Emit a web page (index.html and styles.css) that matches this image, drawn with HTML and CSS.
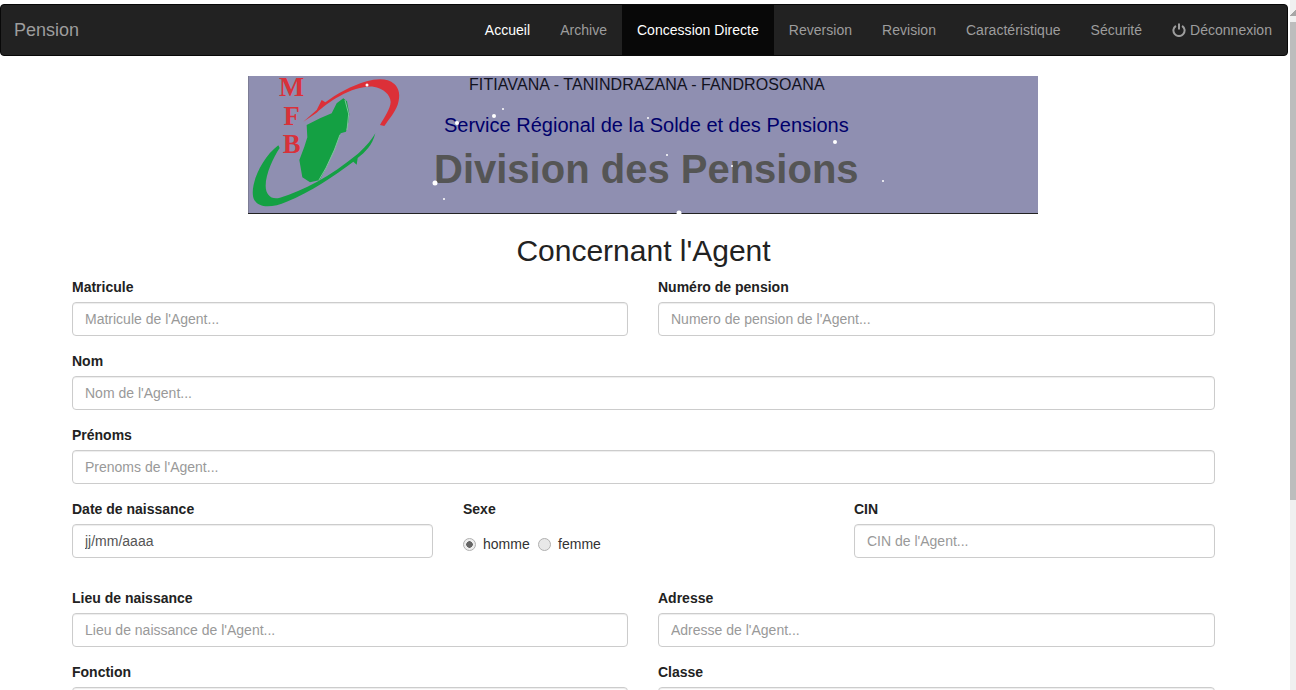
FILE: index.html
```html
<!DOCTYPE html>
<html lang="fr">
<head>
<meta charset="utf-8">
<title>Pension</title>
<link rel="stylesheet" href="styles.css">
</head>
<body>
<div class="page">
  <nav class="navbar">
    <a class="brand">Pension</a>
    <ul class="nav">
      <li class="current"><a>Accueil</a></li>
      <li><a>Archive</a></li>
      <li class="active"><a>Concession Directe</a></li>
      <li><a>Reversion</a></li>
      <li><a>Revision</a></li>
      <li><a>Caractéristique</a></li>
      <li><a>Sécurité</a></li>
      <li><a class="logout"><svg class="power" viewBox="0 0 14 14" width="14" height="14"><path d="M3.9 2.8A5.6 5.6 0 1 0 10.1 2.8" fill="none" stroke="currentColor" stroke-width="2"/><path d="M7 .6V6.6" fill="none" stroke="currentColor" stroke-width="2"/></svg> Déconnexion</a></li>
    </ul>
  </nav>
  <main class="container">
    <svg class="banner" viewBox="0 0 790 138" width="790" height="138">
      <rect class="banner-bg" width="790" height="137"/>
      <rect class="banner-edge" width="1" height="137"/>
      <rect class="banner-line" y="137" width="790" height="1"/>
      <g transform="translate(-3,-2) scale(0.33333)">
        <path class="red" d="M175 143L215 108L230 78L241 85C275 60 320 35 365 22C395 14 428 12 448 30C463 44 467 65 458 92C450 115 432 135 418 156L405 153C418 130 436 105 437 84C436 62 415 42 385 38C355 36 320 47 285 66C258 80 232 100 215 116Z"/>
        <path class="green" d="M100 214L104 222C85 250 62 300 62 335C62 362 78 378 105 371C175 350 255 308 338 240C355 225 375 205 391 178C382 215 360 235 338 252L335 272L325 263C270 305 195 355 125 383C85 400 45 405 28 378C10 345 45 255 100 214Z"/>
        <path class="map" d="M295 73L306 82L313 120L310 145L303 173L287 178L270 223L245 278L225 318L195 325L172 310L163 258L178 218L187 190L185 153L225 133L260 118L275 88Z"/>
        <path class="map-edge" d="M300 78L311 120L306 168M285 182L268 228L243 282L222 318"/>
        <text class="mfb" x="140" y="67">M</text>
        <text class="mfb" x="140" y="152">F</text>
        <text class="mfb" x="140" y="237">B</text>
      </g>
      <text class="motto" x="221" y="14">FITIAVANA - TANINDRAZANA - FANDROSOANA</text>
      <text class="service" x="196" y="56">Service Régional de la Solde et des Pensions</text>
      <text class="division" x="186" y="107">Division des Pensions</text>
      <g class="stars">
        <circle cx="119" cy="9" r="1.5"/>
        <circle cx="246" cy="40" r="2"/>
        <circle cx="255" cy="33" r="1"/>
        <circle cx="209" cy="47" r="2"/>
        <circle cx="187" cy="107" r="2.5"/>
        <circle cx="196" cy="123" r="1"/>
        <circle cx="400" cy="42" r="1"/>
        <circle cx="419" cy="79" r="1"/>
        <circle cx="484" cy="90" r="1"/>
        <circle cx="587" cy="66" r="2"/>
        <circle cx="635" cy="105" r="1"/>
        <circle cx="431" cy="137" r="2.5"/>
      </g>
    </svg>
    <h2 class="title">Concernant l'Agent</h2>
    <form>
      <div class="row two">
        <div class="group"><label>Matricule</label><input class="control" type="text" placeholder="Matricule de l'Agent..."></div>
        <div class="group"><label>Numéro de pension</label><input class="control" type="text" placeholder="Numero de pension de l'Agent..."></div>
      </div>
      <div class="group"><label>Nom</label><input class="control" type="text" placeholder="Nom de l'Agent..."></div>
      <div class="group"><label>Prénoms</label><input class="control" type="text" placeholder="Prenoms de l'Agent..."></div>
      <div class="row three">
        <div class="group"><label>Date de naissance</label><input class="control date" type="text" value="jj/mm/aaaa"></div>
        <div class="group">
          <label>Sexe</label>
          <div class="radios">
            <input class="radio" type="radio" name="sexe" id="h" checked><span class="radio-label">homme</span>
            <input class="radio" type="radio" name="sexe" id="f"><span class="radio-label">femme</span>
          </div>
        </div>
        <div class="group"><label>CIN</label><input class="control" type="text" placeholder="CIN de l'Agent..."></div>
      </div>
      <div class="row two">
        <div class="group"><label>Lieu de naissance</label><input class="control" type="text" placeholder="Lieu de naissance de l'Agent..."></div>
        <div class="group"><label>Adresse</label><input class="control" type="text" placeholder="Adresse de l'Agent..."></div>
      </div>
      <div class="row two">
        <div class="group"><label>Fonction</label><input class="control" type="text"></div>
        <div class="group"><label>Classe</label><input class="control" type="text"></div>
      </div>
    </form>
  </main>
</div>
<div class="scrollbar"><div class="scroll-arrow"></div><div class="scroll-thumb"></div></div>
</body>
</html>
```
FILE: styles.css
```css
* { box-sizing: border-box; }
html, body { height: 690px; overflow: hidden; }
body {
  margin: 0;
  display: flex;
  background: #fff;
  color: #222;
  font: 14px/20px "Liberation Sans", Arial, sans-serif;
}
.page { width: 1288px; flex: none; padding-top: 4px; }
.navbar {
  display: flex;
  justify-content: space-between;
  height: 52px;
  margin-bottom: 20px;
  background: #222;
  border: 1px solid #080808;
  border-radius: 4px;
}
.brand { padding: 15px 13px; font-size: 18px; color: #9d9d9d; }
.nav { display: flex; list-style: none; margin: 0; padding: 0; letter-spacing: .025px; }
.nav a { display: block; height: 50px; padding: 15px; color: #9d9d9d; }
.nav .current a { color: #fff; }
.nav .active a { color: #fff; background: #080808; }
.power { vertical-align: -2px; }
.container { width: 1143px; margin-left: 72px; }
.banner { display: block; margin-left: 176px; overflow: visible; }
.banner-bg { fill: #8f8fb1; }
.banner-edge { fill: #7d7d95; }
.banner-line { fill: #222; }
.red { fill: #dc3038; }
.green { fill: #14a043; }
.map { fill: #14a043; }
.map-edge { fill: none; stroke: #7cc79b; stroke-width: 3; }
.mfb { font: 700 80px "Liberation Serif", serif; fill: #d8313a; text-anchor: middle; }
.motto { font-size: 16px; letter-spacing: .08px; fill: #12121e; }
.service { font-size: 20px; fill: #00006b; }
.division { font-size: 40px; font-weight: 700; fill: #555; }
.stars { fill: #fff; }
.title {
  margin: 20px 0 10px;
  text-align: center;
  font-size: 30px;
  line-height: 33px;
  font-weight: 400;
}
.row { display: grid; column-gap: 30px; }
.two { grid-template-columns: 556px 1fr; }
.three { grid-template-columns: 1fr 1fr 1fr; margin-bottom: 15px; }
.group { margin-bottom: 15px; }
label { display: block; margin-bottom: 5px; font-weight: 700; }
.control {
  display: block;
  width: 100%;
  height: 34px;
  padding: 6px 12px;
  font: 14px/20px "Liberation Sans", Arial, sans-serif;
  color: #555;
  background: #fff;
  border: 1px solid #ccc;
  border-radius: 4px;
  box-shadow: inset 0 1px 1px rgba(0,0,0,.075);
}
.control::placeholder { color: #999; opacity: 1; }
.radios { display: flex; align-items: center; height: 20px; margin-top: 15px; color: #333; }
.radio {
  appearance: none;
  width: 13px;
  height: 13px;
  margin: 0 7px 0 0;
  border: 1px solid #b0b0b0;
  border-radius: 50%;
  background: #e8e8e8;
}
.radio:checked { background: radial-gradient(circle, #666 0 3px, #eee 3.5px); }
.radio-label { margin-right: 8.4px; }
.scrollbar { width: 8px; flex: none; padding-left: 2px; background: linear-gradient(90deg, #fff 2px, #f0f0f0 2px); }
.scroll-arrow {
  height: 22px;
  background: linear-gradient(135deg, transparent 50%, #a6a6a6 50%) no-repeat 0 10px / 6px 6px;
}
.scroll-thumb { height: 478px; background: #bdbdbd; }
```
